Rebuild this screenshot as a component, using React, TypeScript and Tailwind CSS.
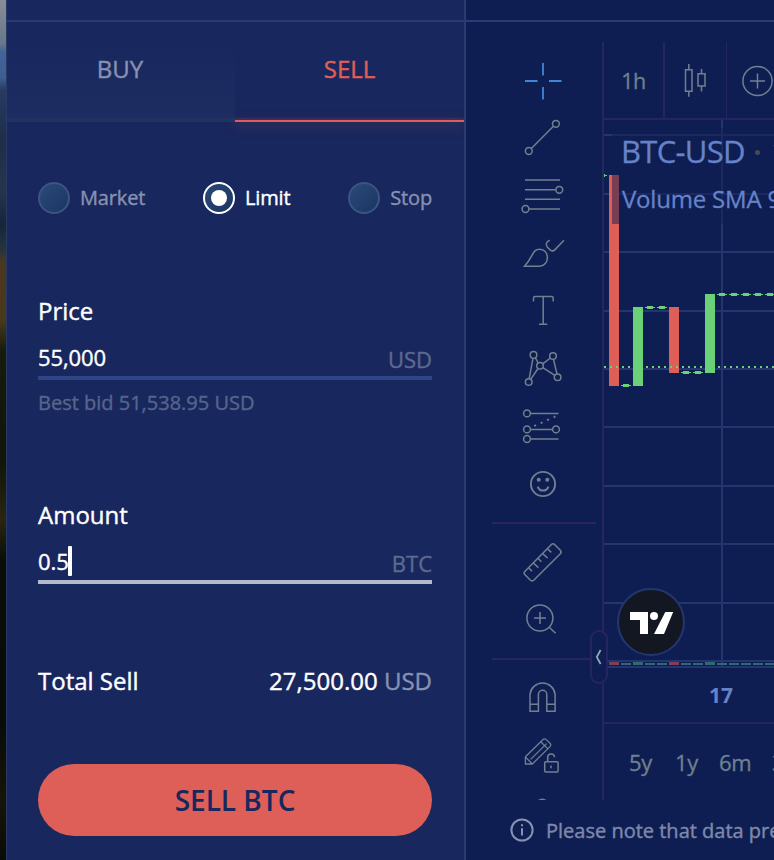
import React from "react";

const GRID_Y = [134, 193, 251, 310, 368, 426, 485, 543, 602, 660];
const DOJIS: [number, number][] = [
  [621, 385.5], [645, 307.5], [657, 307.5], [681, 372.5], [693, 372.5],
  [717, 294.5], [729, 294.5], [741, 294.5], [753, 294.5], [765, 294.5],
];
const RED = "#de5f57";
const GREEN = "#6bd178";

function Radio({ label, active = false }: { label: string; active?: boolean }) {
  return (
    <label className="flex items-center">
      <span
        className={
          "flex h-8 w-8 items-center justify-center rounded-full border-2 bg-linear-to-br from-[#2a4a78] to-[#1b3563] " +
          (active ? "border-white" : "border-[#3b5482]")
        }
      >
        {active && <span className="h-4 w-4 rounded-full bg-white" />}
      </span>
      <span className={"ml-[10px] text-[20px] leading-8 tracking-[-0.15px] " + (active ? "text-white" : "text-[#8791b0]")}>
        {label}
      </span>
    </label>
  );
}

function Tool({ top, height = 58, children }: { top: number; height?: number; children: React.ReactNode }) {
  return (
    <svg
      className="block shrink-0"
      width="58"
      height={height}
      viewBox={`514 ${top} 58 ${height}`}
      fill="none"
      stroke="#71808f"
      strokeWidth="1.5"
    >
      {children}
    </svg>
  );
}

function Toolbar() {
  return (
    <div className="flex h-[758px] w-[138px] shrink-0 flex-col overflow-hidden border-r-2 border-[#262463] pt-[10px] pl-[26px]">
      <div className="flex flex-col pl-[22px]">
        <Tool top={52}>
          <path d="M543 63V75.5M543 87V99.5M525 81H537.5M549 81H561.5" stroke="#4087d8" strokeWidth="1.8" />
        </Tool>
        <Tool top={110}>
          <circle cx="528.8" cy="151" r="3.4" />
          <circle cx="555.9" cy="123.8" r="3.4" />
          <path d="M531.3 148.5L553.4 126.3" />
        </Tool>
        <Tool top={168}>
          <path d="M525 180H560M525 189.8H555.8M525 199.3H560M529 209H560" />
          <circle cx="559.3" cy="189.8" r="3.4" />
          <circle cx="525.5" cy="209" r="3.4" />
        </Tool>
        <Tool top={226}>
          <path d="M524.5 266.2H539.5C544.5 266.2 547.4 262 547.4 257.5C547.4 252.5 544 249.2 539.8 249.2C532 249.2 534 256 524.5 266.2Z" />
          <path d="M549.8 240.3C546.2 241.5 545.2 244.8 547.4 247.2L550.4 250.1C551.8 251.2 553.6 251 555 249.6L564 240.3" />
        </Tool>
        <Tool top={284}>
          <path d="M533.5 301.6V298.2Q533.5 296.6 535.1 296.6H551.6Q553.2 296.6 553.2 298.2V301.6M543.2 296.6V324.1M539 324.2H547.3" />
        </Tool>
        <Tool top={342}>
          <circle cx="533.5" cy="354.9" r="3.3" />
          <circle cx="553" cy="356" r="3.3" />
          <circle cx="540" cy="365.8" r="3.3" />
          <circle cx="528.7" cy="382" r="3.3" />
          <circle cx="557.6" cy="377.2" r="3.3" />
          <path d="M533 358.2L529.2 378.7M535.3 357.7L538.2 363M542.7 363.9L550.4 358M538 368.5L530.7 379.3M542.8 367.7L554.8 375.3M553.5 359.3L557 373.9" />
        </Tool>
        <Tool top={400}>
          <circle cx="527" cy="413.4" r="3.4" />
          <circle cx="527" cy="429.4" r="3.4" />
          <circle cx="556" cy="429.4" r="3.4" />
          <circle cx="527" cy="439" r="3.4" />
          <path d="M530.4 413.4H558.5M530.4 429.4H552.6M530.4 439H558.5" />
          <path d="M534.2 426L556 416.2" strokeWidth="1.9" strokeDasharray="2 5.1" />
        </Tool>
        <Tool top={458}>
          <circle cx="543" cy="484" r="12.1" strokeWidth="1.9" />
          <circle cx="538.7" cy="479.8" r="2" fill="#71808f" stroke="none" />
          <circle cx="547.3" cy="479.8" r="2" fill="#71808f" stroke="none" />
          <path d="M537.8 486.6Q539 490.6 543 490.6Q547 490.6 548.4 486.6" strokeWidth="2" />
        </Tool>
      </div>
      <div className="mt-[6px] mb-[9px] h-[2px] w-[104px] shrink-0 bg-[#292563]" />
      <div className="flex flex-col pl-[22px]">
        <Tool top={533}>
          <path d="M551.2 544.7Q553 542.9 554.8 544.7L560.3 550.2Q562 552 560.3 553.8L534 580Q532 581.8 530.2 580L525 574.8Q523.2 573 525 571.2Z" />
          <path d="M528.6 567.7L532 571.1M533.3 563L538.4 567.6M538 558.3L541.4 561.7M542.6 553.6L547.6 558M547.4 548.8L551.3 552.4" />
        </Tool>
        <Tool top={591}>
          <circle cx="539.9" cy="618" r="13" />
          <path d="M534 618H546M540 612V624M549.2 627.2L555.6 633.2" />
        </Tool>
      </div>
      <div className="mt-[9px] mb-2 h-[2px] w-[110px] shrink-0 bg-[#292563]" />
      <div className="flex flex-col pl-[22px]">
        <Tool top={668}>
          <path d="M530 711.2V694.5A12.6 12.6 0 0 1 555.1 694.5V711.2H546.8V694.5A4.2 4.2 0 0 0 538.4 694.5V711.2ZM530 704.2H538.4M546.8 704.2H555.1" />
        </Tool>
        <Tool top={726}>
          <path
            strokeWidth="1.3"
            d="M525.4 756.8L542.8 739.8Q544.5 738 546.2 739.6L550 743.2Q551.5 744.8 550 746.6L532.3 764H525.4ZM525.6 757.2L532 763.6M530.6 759.4L546.6 743.6M540.8 741.8L547.6 748.6"
          />
          <rect x="544.7" y="761.7" width="13.4" height="10.3" rx="1" />
          <path d="M547.7 761.5V757.3Q547.7 753.9 551.2 753.9Q554.4 753.9 554.6 757.3M551 765.5V768.2" />
        </Tool>
        <Tool top={784} height={16}>
          <path d="M538 801Q542.3 797.4 546.6 801" />
        </Tool>
      </div>
    </div>
  );
}

function TopBar() {
  return (
    <div className="flex h-[78px] shrink-0 border-b-2 border-[#262463]">
      <div className="flex w-[61px] shrink-0 items-center justify-center border-r-2 border-[#262463] pt-[2px] text-[21.5px] tracking-[-0.6px] text-[#71808f] [-webkit-text-stroke:0.3px]">
        1h
      </div>
      <div className="w-[62px] shrink-0 border-r border-[#262463]">
        <svg width="61" height="76" viewBox="665 42 61 76" fill="none" stroke="#71808f" strokeWidth="1.5">
          <path d="M685.5 69.8H692V91.2H685.5ZM688.8 64V69.8M688.8 91.2V96.7M698 73.8H705V86H698ZM701.5 69V73.8M701.5 86V91.6" />
        </svg>
      </div>
      <svg className="shrink-0" width="60" height="76" viewBox="727 42 60 76" fill="none" stroke="#71808f" strokeWidth="1.5">
        <circle cx="757.5" cy="81" r="14.6" />
        <path d="M750 81H765M757.5 73.5V88.5" />
      </svg>
    </div>
  );
}

function Chart() {
  return (
    <div className="relative h-[548px] shrink-0">
      <svg className="block" width="170" height="548" viewBox="604 120 170 548" shapeRendering="crispEdges">
        {GRID_Y.map((y) => (
          <rect key={y} x="604" y={y} width="170" height="2" fill="#24366f" />
        ))}
        <rect x="721" y="120" width="2" height="546" fill="#24366f" />
        <rect x="604" y="666" width="170" height="2" fill="#24366f" />
        <rect x="604" y="175" width="3" height="1" fill={GREEN} />
        <rect x="604" y="174" width="1" height="3" fill={GREEN} />
        <rect x="609" y="175" width="10" height="211" fill={RED} />
        <rect x="633" y="307" width="10" height="79" fill={GREEN} />
        <rect x="669" y="307" width="10" height="66" fill={RED} />
        <rect x="705" y="294" width="10" height="79" fill={GREEN} />
        {DOJIS.map(([x, y]) => (
          <g key={x} fill={GREEN}>
            <rect x={x} y={y - 0.5} width="10" height="1" />
            <rect x={x + 2} y={y - 1.5} width="6" height="3" />
          </g>
        ))}
        {Array.from({ length: 29 }, (_, i) => (
          <rect key={i} x={604 + i * 6} y="366" width="2" height="2" fill={GREEN} />
        ))}
        {Array.from({ length: 14 }, (_, i) => {
          const red = i === 0 || i === 5;
          const tall = red || i === 2 || i === 8;
          return (
            <rect
              key={i}
              x={609 + i * 12}
              y={tall ? 662 : 663}
              width="10"
              height={tall ? 3 : 2}
              fill={red ? "#7f3f58" : "#30696f"}
            />
          );
        })}
      </svg>
      <div className="absolute top-2 left-2 h-24 w-[162px] overflow-hidden bg-[#0f1e52]/50 whitespace-nowrap text-[#6683c9] [-webkit-text-stroke:0.3px]">
        <div className="flex items-center pl-[9px] text-[31px] leading-[46px]">
          <span className="w-[134px] shrink-0 tracking-[-0.7px]">BTC-USD</span>
          <span className="mt-[2px] h-[5px] w-[5px] shrink-0 rounded-full bg-[#474957]" />
          <span className="ml-[11px]">1h</span>
        </div>
        <div className="pl-[10px] text-[24px] leading-[50px] tracking-[-0.2px]">Volume SMA 9</div>
      </div>
      <div className="absolute top-[468px] left-[13px] h-[68px] w-[68px] rounded-full border-2 border-[#24366f] bg-[#131722]">
        <svg width="64" height="64" viewBox="619 590 64 64" fill="#fff">
          <path d="M630 612H648V634H640V620H630ZM665.3 612H673.2L664 634H654Z" />
          <circle cx="654" cy="616" r="4" />
        </svg>
      </div>
      <div className="absolute top-[510px] -left-[14px] flex h-[54px] w-[18px] items-center justify-center rounded-[9px] border-2 border-[#262463] bg-[#0f1e52]">
        <svg width="14" height="20" viewBox="0 0 14 20" fill="none" stroke="#9ca8b5" strokeWidth="1.7">
          <path d="M8.6 3L4.8 10L8.6 17" />
        </svg>
      </div>
    </div>
  );
}

export default function App() {
  return (
    <div className="flex h-[860px] w-[774px] overflow-hidden bg-[#0f1e52] font-['Open_Sans','Noto_Sans',sans-serif]">
      <div className="w-[6px] shrink-0 bg-[linear-gradient(180deg,#888c96_0px,#697789_44px,#42639a_52px,#3f5d90_78px,#263b62_90px,#202d48_140px,#26354c_190px,#17253b_225px,#28343b_250px,#4a371e_262px,#49391c_320px,#171a0c_352px,#11150a_460px,#292510_520px,#0a0d08_560px,#080b07_720px,#161509_800px,#090b06_860px)]" />
      <section className="flex w-[460px] shrink-0 flex-col border-r-2 border-l border-r-[#293b75] border-l-[#2a3a66] bg-[#18275d] [-webkit-text-stroke:0.4px]">
        <div className="h-[22px] shrink-0 border-b-2 border-[#293b75]" />
        <div className="flex h-[100px] shrink-0 overflow-x-clip text-[24px]">
          <div className="flex w-[228px] justify-center border-b-4 border-[#223263] bg-linear-to-b from-[#18275d] from-20% to-[#1d2d62] pt-[31px] pr-[2px] leading-8 text-[#8791b0]">
            BUY
          </div>
          <div className="flex flex-1 flex-col text-center leading-8 text-[#e05e56]">
            <span className="flex-1 pt-[31px]">SELL</span>
            <span className="h-[2px] bg-[#2a2f60]" />
            <span className="h-[2px] bg-[#e05e56] shadow-[0_3px_12px_#e05e5680]" />
          </div>
        </div>
        <div className="flex flex-col pr-8 pl-[31px]">
          <div className="mt-[60px] flex h-8 items-center justify-between">
            <Radio label="Market" />
            <Radio label="Limit" active />
            <Radio label="Stop" />
          </div>
          <div className="mt-[81px] h-8 text-[24px] leading-8 text-white">Price</div>
          <div className="flex h-[53px] items-center justify-between border-b-4 border-[#2f4686] pt-4 text-[22px]">
            <span className="-mt-1 tracking-[-0.1px] text-white">55,000</span>
            <span className="text-[#5d698f]">USD</span>
          </div>
          <div className="mt-[7px] h-8 text-[20px] leading-8 text-[#56648b]">Best bid 51,538.95 USD</div>
          <div className="mt-[80px] h-8 text-[24px] leading-8 text-white">Amount</div>
          <div className="flex h-[53px] items-center justify-between border-b-4 border-[#b4b9cd] pt-4 text-[22px]">
            <span className="-mt-1 flex items-center text-white">
              <span className="w-[30px] tracking-[-0.1px]">0.5</span>
              <span className="-mt-[1px] h-[30px] w-1 rounded-[1px] bg-white" />
            </span>
            <span className="text-[#5d698f]">BTC</span>
          </div>
          <div className="mt-[81px] flex h-8 items-center justify-between text-[24px] text-white">
            <span>Total Sell</span>
            <span>
              27,500.00 <span className="text-[#8791b0]">USD</span>
            </span>
          </div>
          <button className="mt-[67px] h-[72px] rounded-full bg-[#dd5f57] text-[28px] font-semibold text-[#18275d] [-webkit-text-stroke:0px]">
            SELL BTC
          </button>
        </div>
      </section>
      <section className="flex w-[308px] shrink-0 flex-col">
        <div className="h-[22px] shrink-0 border-b-2 border-[#293b75]" />
        <div className="mt-5 flex h-[758px] shrink-0">
          <Toolbar />
          <div className="flex w-[170px] flex-col">
            <TopBar />
            <Chart />
            <div className="flex h-[56px] shrink-0 items-center border-b-2 border-[#262463] pt-[1px] pl-[105px] text-[21px] font-bold text-[#6683c9]">
              17
            </div>
            <div className="flex h-[76px] shrink-0 items-center overflow-hidden pl-[25px] text-[22px] tracking-[-0.4px] whitespace-nowrap text-[#71808f] [-webkit-text-stroke:0.3px]">
              <span className="w-[46px] shrink-0">5y</span>
              <span className="w-[44px] shrink-0">1y</span>
              <span className="w-[53px] shrink-0">6m</span>
              <span>3m</span>
            </div>
          </div>
        </div>
        <div className="flex h-[60px] items-center overflow-hidden pl-11 whitespace-nowrap text-[#7d89aa] [-webkit-text-stroke:0.4px]">
          <svg className="shrink-0" width="24" height="24" viewBox="0 0 24 24" fill="none" stroke="#8791b0" strokeWidth="2">
            <circle cx="12" cy="12" r="10.6" />
            <path d="M12 10.2V17.6M12 6.2V8.2" />
          </svg>
          <span className="mt-[1px] ml-3 text-[20px]">Please note that data presented</span>
        </div>
      </section>
    </div>
  );
}
